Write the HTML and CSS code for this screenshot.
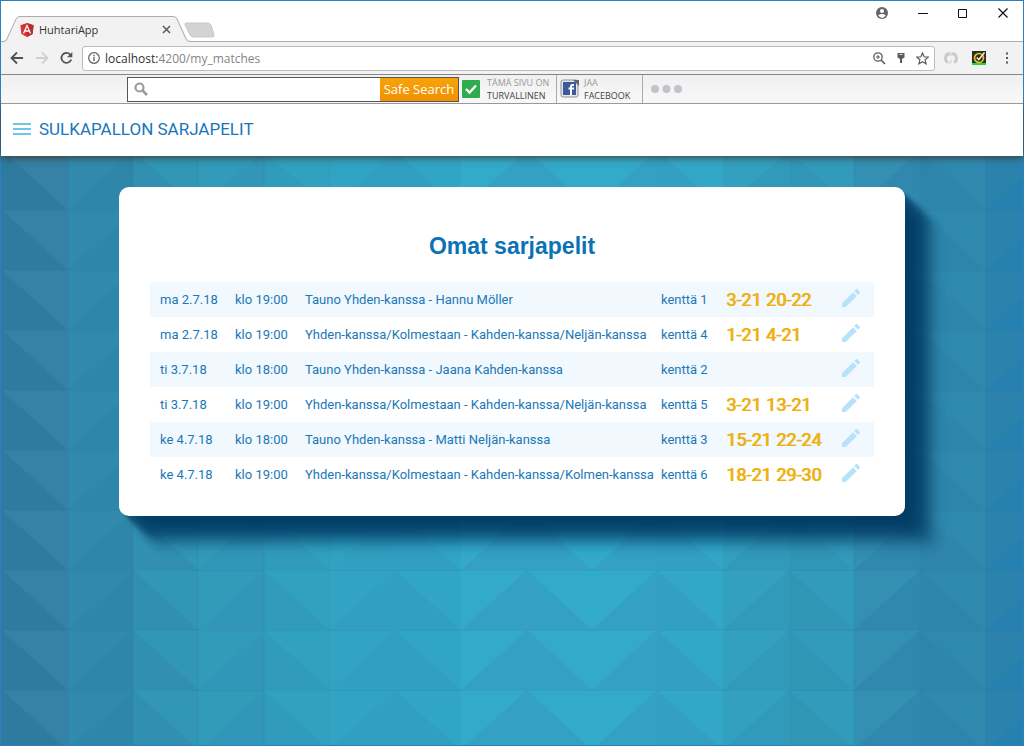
FILE: index.html
```html
<!DOCTYPE html>
<html lang="fi">
<head>
<meta charset="utf-8">
<title>HuhtariApp</title>
<link rel="stylesheet" href="styles.css">
</head>
<body>
<div class="window">
  <header class="chrome">
    <div class="tabstrip">
      <svg class="tab-shape" width="216" height="26" viewBox="0 0 216 26" aria-hidden="true">
        <path d="M0 25.500H4L15 3Q16.500 .5 19 .5H173Q176 .5 177 3L187 24Q188 25.500 190 25.500H216V27H0Z" fill="#f2f2f2"/>
        <path d="M0 25.500H2Q5 25.500 6 23L15 3Q16.500 .5 19 .5H172Q175 .5 176 3L185 23Q186 25.500 189 25.500H216" fill="none" stroke="#a9abad"/>
        <path d="M185 7H206Q209 7 210 9L213 19Q213.500 21 211 21H193Q190 21 189 19L184 9Q183.500 7 185 7Z" fill="#d3d3d3" stroke="#c8c8c8"/>
      </svg>
      <div class="tab">
        <svg width="14" height="14" viewBox="0 0 14 14" aria-hidden="true"><path d="M7 0L13.600 2.300L12.600 11L7 14L1.400 11L.4 2.300Z" fill="#dd2c33"/><path d="M7 0L13.600 2.300L12.600 11L7 14Z" fill="#b52e31"/><path d="M3.500 10.500L7 2.500L10.500 10.500M5 8H9" fill="none" stroke="#fff" stroke-width="1.300"/></svg>
        <span class="tab-title">HuhtariApp</span>
        <button class="bare" aria-label="Sulje välilehti"><svg width="9" height="9" viewBox="0 0 9 9"><path d="M1 1L8 8M8 1L1 8" stroke="#5a5a5a" stroke-width="1.500"/></svg></button>
      </div>
      <div class="win-buttons">
        <button class="bare" aria-label="Käyttäjä"><svg width="12" height="12" viewBox="0 0 12 12"><circle cx="6" cy="6" r="6" fill="#666"/><circle cx="6" cy="4" r="2" fill="#fff"/><path d="M2.200 8.300Q6 5.500 9.800 8.300Q8 11 6 11Q4 11 2.200 8.300Z" fill="#fff"/></svg></button>
        <button class="bare" aria-label="Pienennä"><svg width="10" height="10" viewBox="0 0 10 10"><path d="M0 5.500H10" stroke="#111"/></svg></button>
        <button class="bare" aria-label="Suurenna"><svg width="10" height="10" viewBox="0 0 10 10"><path d="M.5 1.500H8.500V9.500H.5Z" fill="none" stroke="#111"/></svg></button>
        <button class="bare" aria-label="Sulje"><svg width="10" height="10" viewBox="0 0 10 10"><path d="M.5 .5L9.500 9.500M9.500 .5L.5 9.500" stroke="#111" stroke-width="1.200"/></svg></button>
      </div>
    </div>
    <div class="navbar">
      <button class="bare" aria-label="Takaisin"><svg width="14" height="14" viewBox="0 0 14 14"><path d="M13 7H2M7 1.500L1.500 7L7 12.500" fill="none" stroke="#4f5254" stroke-width="1.800"/></svg></button>
      <button class="bare" aria-label="Eteenpäin"><svg width="14" height="14" viewBox="0 0 14 14"><path d="M1 7H12M7 1.500L12.500 7L7 12.500" fill="none" stroke="#d0d1d2" stroke-width="1.800"/></svg></button>
      <button class="bare" aria-label="Lataa uudelleen"><svg width="14" height="14" viewBox="0 0 14 14"><path d="M10.200 3.500A5 5 0 1 0 11.200 8.500" fill="none" stroke="#4f5254" stroke-width="1.800"/><path d="M12.300 1V6.200H7Z" fill="#4f5254"/></svg></button>
      <div class="omnibox">
        <svg width="12" height="12" viewBox="0 0 12 12" aria-hidden="true"><circle cx="6" cy="6" r="5.300" fill="none" stroke="#5a5d5f" stroke-width="1.200"/><path d="M6 5V9M6 2.800V4.200" stroke="#5a5d5f" stroke-width="1.300"/></svg>
        <a class="url" href="#"><span class="host">localhost:</span>4200/my_matches</a>
        <svg width="14" height="14" viewBox="0 0 14 14" aria-hidden="true"><circle cx="6" cy="6" r="4.200" fill="none" stroke="#5a5d5f" stroke-width="1.300"/><path d="M9 9L13 13" stroke="#5a5d5f" stroke-width="1.700"/><path d="M4 6H8M6 4V8" stroke="#5a5d5f"/></svg>
        <svg width="8" height="12" viewBox="0 0 8 12" aria-hidden="true"><path d="M.5 1H7.500V5.500L5 7V11H3V7L.5 5.500Z" fill="#5a5d5f"/><path d="M2.500 2.500H5.500" stroke="#ddd"/></svg>
        <svg width="13" height="13" viewBox="0 0 13 13" aria-hidden="true"><path d="M6.500 1L8.100 4.800L12.200 5.100L9.100 7.800L10.100 11.800L6.500 9.700L2.900 11.800L3.900 7.800L.8 5.100L4.900 4.800Z" fill="none" stroke="#5a5d5f" stroke-width="1.200"/></svg>
      </div>
      <div class="extensions">
        <svg width="14" height="14" viewBox="0 0 14 14" aria-hidden="true"><path d="M6 2.500A4.800 4.800 0 0 0 4 11.500M8 2.500A4.800 4.800 0 0 1 10 11.500" fill="none" stroke="#c9c9c9" stroke-width="2.800"/><path d="M8.500 1L6.500 5M7.500 9L5.500 13" stroke="#d5d5d5" stroke-width="1.500"/></svg>
        <svg width="14" height="14" viewBox="0 0 14 14" aria-hidden="true"><rect width="14" height="14" fill="#26302a"/><path d="M0 13H14" stroke="#23d839" stroke-width="2"/><circle cx="7" cy="7" r="4.500" fill="none" stroke="#f0bd23" stroke-width="1.700"/><path d="M4.800 6.500L6.800 8.700L12.500 1.500" fill="none" stroke="#fff4c4" stroke-width="1.500"/></svg>
        <button class="bare" aria-label="Valikko"><svg width="14" height="14" viewBox="0 0 14 14"><path d="M6 1.500H8V3.500H6ZM6 6H8V8H6ZM6 10.500H8V12.500H6Z" fill="#555"/></svg></button>
      </div>
    </div>
    <div class="safebar">
      <form class="search">
        <svg width="14" height="14" viewBox="0 0 14 14" aria-hidden="true"><circle cx="5.500" cy="5.500" r="4" fill="none" stroke="#9b9b9b" stroke-width="2.200"/><path d="M8.500 8.500L13 13" stroke="#9b9b9b" stroke-width="2.600"/></svg>
        <input type="text" aria-label="Safe Search">
        <button type="button">Safe Search</button>
      </form>
      <div class="safe-item">
        <svg width="18" height="18" viewBox="0 0 18 18" aria-hidden="true"><rect width="18" height="18" rx="1" fill="#2fad4e"/><path d="M4 9L7.500 12.500L14 5.500" fill="none" stroke="#fff" stroke-width="2.400"/></svg>
        <p>TÄMÄ SIVU ON<br><b>TURVALLINEN</b></p>
      </div>
      <div class="safe-item share">
        <svg width="20" height="20" viewBox="0 0 20 20" aria-hidden="true"><rect x="1" y="1" width="17" height="17" rx="2" fill="#e5e7ea" stroke="#8d9299"/><rect x="3" y="3" width="13" height="13" fill="#3c5a9b"/><path d="M14 6H12.500Q11 6 11 7.500V16M8.500 9.500H14" fill="none" stroke="#fff" stroke-width="2"/><path d="M13 1H19V7Z" fill="#61666c"/></svg>
        <p>JAA<br><b>FACEBOOK</b></p>
      </div>
      <button class="bare more" aria-label="Lisää"><svg width="32" height="8" viewBox="0 0 32 8"><g fill="#c0c5cb"><circle cx="4" cy="4" r="4"/><circle cx="15.500" cy="4" r="4"/><circle cx="27" cy="4" r="4"/></g></svg></button>
    </div>
  </header>
  <div class="appbar">
    <button class="bare" aria-label="Avaa valikko"><svg width="18" height="14" viewBox="0 0 18 14"><path d="M0 2H18M0 7H18M0 12H18" stroke="#6fc5ec" stroke-width="2"/></svg></button>
    <span>SULKAPALLON SARJAPELIT</span>
  </div>
  <main class="page">
    <section class="card">
      <h1>Omat sarjapelit</h1>
      <table class="matches">
        <colgroup><col class="c-date"><col class="c-time"><col class="c-names"><col class="c-court"><col class="c-score"><col class="c-edit"></colgroup>
        <tbody>
          <tr><td>ma 2.7.18</td><td>klo 19:00</td><td>Tauno Yhden-kanssa - Hannu Möller</td><td>kenttä 1</td><td class="score">3-21 20-22</td><td><button class="bare edit" aria-label="Muokkaa"><svg width="18" height="18" viewBox="3 3 18 18"><path d="M3 17.250V21h3.750L17.810 9.940l-3.750-3.750L3 17.250zM20.710 7.040a1 1 0 0 0 0-1.410l-2.340-2.340a1 1 0 0 0-1.410 0l-1.830 1.830 3.750 3.750 1.830-1.830z"/></svg></button></td></tr>
          <tr><td>ma 2.7.18</td><td>klo 19:00</td><td>Yhden-kanssa/Kolmestaan - Kahden-kanssa/Neljän-kanssa</td><td>kenttä 4</td><td class="score">1-21 4-21</td><td><button class="bare edit" aria-label="Muokkaa"><svg width="18" height="18" viewBox="3 3 18 18"><path d="M3 17.250V21h3.750L17.810 9.940l-3.750-3.750L3 17.250zM20.710 7.040a1 1 0 0 0 0-1.410l-2.340-2.340a1 1 0 0 0-1.410 0l-1.830 1.830 3.750 3.750 1.830-1.830z"/></svg></button></td></tr>
          <tr><td>ti 3.7.18</td><td>klo 18:00</td><td>Tauno Yhden-kanssa - Jaana Kahden-kanssa</td><td>kenttä 2</td><td class="score"></td><td><button class="bare edit" aria-label="Muokkaa"><svg width="18" height="18" viewBox="3 3 18 18"><path d="M3 17.250V21h3.750L17.810 9.940l-3.750-3.750L3 17.250zM20.710 7.040a1 1 0 0 0 0-1.410l-2.340-2.340a1 1 0 0 0-1.410 0l-1.830 1.830 3.750 3.750 1.830-1.830z"/></svg></button></td></tr>
          <tr><td>ti 3.7.18</td><td>klo 19:00</td><td>Yhden-kanssa/Kolmestaan - Kahden-kanssa/Neljän-kanssa</td><td>kenttä 5</td><td class="score">3-21 13-21</td><td><button class="bare edit" aria-label="Muokkaa"><svg width="18" height="18" viewBox="3 3 18 18"><path d="M3 17.250V21h3.750L17.810 9.940l-3.750-3.750L3 17.250zM20.710 7.040a1 1 0 0 0 0-1.410l-2.340-2.340a1 1 0 0 0-1.410 0l-1.830 1.830 3.750 3.750 1.830-1.830z"/></svg></button></td></tr>
          <tr><td>ke 4.7.18</td><td>klo 18:00</td><td>Tauno Yhden-kanssa - Matti Neljän-kanssa</td><td>kenttä 3</td><td class="score">15-21 22-24</td><td><button class="bare edit" aria-label="Muokkaa"><svg width="18" height="18" viewBox="3 3 18 18"><path d="M3 17.250V21h3.750L17.810 9.940l-3.750-3.750L3 17.250zM20.710 7.040a1 1 0 0 0 0-1.410l-2.340-2.340a1 1 0 0 0-1.410 0l-1.830 1.830 3.750 3.750 1.830-1.830z"/></svg></button></td></tr>
          <tr><td>ke 4.7.18</td><td>klo 19:00</td><td>Yhden-kanssa/Kolmestaan - Kahden-kanssa/Kolmen-kanssa</td><td>kenttä 6</td><td class="score">18-21 29-30</td><td><button class="bare edit" aria-label="Muokkaa"><svg width="18" height="18" viewBox="3 3 18 18"><path d="M3 17.250V21h3.750L17.810 9.940l-3.750-3.750L3 17.250zM20.710 7.040a1 1 0 0 0 0-1.410l-2.340-2.340a1 1 0 0 0-1.410 0l-1.830 1.830 3.750 3.750 1.830-1.830z"/></svg></button></td></tr>
        </tbody>
      </table>
    </section>
  </main>
</div>
</body>
</html>
```
FILE: styles.css
```css
* { box-sizing: border-box; }
body { margin: 0; font-family: Roboto, sans-serif; }
p { margin: 0; }
svg { display: block; flex: none; }
.bare { display: block; padding: 0; border: 0; background: none; }

.window {
  display: flex;
  flex-direction: column;
  min-height: 100vh;
  border: 1px solid #2b80bd;
}

/* browser chrome */
.chrome { position: relative; z-index: 1; font-family: "Open Sans", sans-serif; }
.tabstrip {
  position: relative;
  display: flex;
  justify-content: space-between;
  height: 41px;
  padding: 0 15px 0 19px;
  background: linear-gradient(#a9abad, #a9abad) bottom / 100% 1px no-repeat #fff;
}
.tab-shape { position: absolute; left: 0; bottom: 0; }
.tab {
  position: relative;
  display: flex;
  align-items: center;
  gap: 5px;
  width: 151px;
  padding-top: 16px;
}
.tab-title { flex: 1; font-size: 11px; color: #333; }
.win-buttons { display: flex; gap: 30px; padding-top: 6px; height: 18px; align-items: center; }

.navbar {
  display: flex;
  align-items: center;
  gap: 11px;
  height: 32px;
  padding: 0 9px;
  background: #f2f2f2;
}
.omnibox {
  flex: 1;
  display: flex;
  align-items: center;
  gap: 11px;
  height: 25px;
  margin: 0 -2px 0 -3px;
  padding: 0 5px;
  border: 1px solid #bcbcbc;
  border-radius: 3px;
  background: #fff;
}
.url { flex: 1; margin-left: -6px; font-size: 12px; color: #858585; text-decoration: none; }
.host { color: #333; }
.extensions { display: flex; align-items: center; gap: 14px; }

.safebar {
  display: flex;
  align-items: center;
  height: 30px;
  padding-left: 126px;
  border-top: 1px solid #858585;
  border-bottom: 1px solid #999;
  background: linear-gradient(#f0f0f0, #f8f8f8);
}
.search {
  display: flex;
  align-items: center;
  width: 332px;
  height: 25px;
  padding-left: 6px;
  border: 1px solid #555;
  background: #fff;
}
.search input { flex: 1; min-width: 0; height: 20px; border: 0; outline: 0; }
.search button {
  width: 78px;
  height: 23px;
  padding: 0;
  border: 0;
  background: linear-gradient(#f6a30a, #f29100);
  color: #fff;
  font: 13px/23px "Open Sans", sans-serif;
}
.safe-item {
  display: flex;
  align-items: center;
  gap: 7px;
  width: 98px;
  height: 28px;
  padding-left: 3px;
  border-right: 1px solid #aaa;
  white-space: nowrap;
  font-size: 9px;
  line-height: 13px;
  color: #999;
}
.safe-item b { font-weight: 400; color: #444; }
.share { width: 86px; gap: 4px; padding-left: 3px; }
.more { margin-left: 8px; }

/* application */
.appbar {
  position: relative;
  display: flex;
  align-items: center;
  gap: 8px;
  height: 52px;
  padding: 0 12px 2px;
  background: #fff;
  box-shadow: 0 1px 8px rgba(60, 30, 10, .8);
  font-size: 17px;
  color: #1976b9;
}
.page {
  flex: 1;
  display: flex;
  justify-content: center;
  align-items: flex-start;
  padding: 31px 24px;
  background: #319bbc url("data:image/svg+xml,%3Csvg xmlns='http://www.w3.org/2000/svg' viewBox='1 0 1022 60' preserveAspectRatio='none'%3E%3Cg fill='%232f7a9f'%3E%3Cpath d='M0 0H68V60H0Z'/%3E%3Cpath fill='%233582a6' d='M2 0H68V60Z'/%3E%3Cpath fill='%232e86a9' d='M68 0H134V60H68Z'/%3E%3Cpath fill='%23318aab' d='M68 0H133L68 60Z'/%3E%3Cpath fill='%23318fb1' d='M133 0H199V60H133Z'/%3E%3Cpath fill='%233197b5' d='M133 0H199V60Z'/%3E%3Cpath fill='%233196b7' d='M198 0H265V60H198Z'/%3E%3Cpath fill='%23329bb9' d='M198 0H264L198 60Z'/%3E%3Cpath fill='%23319bbc' d='M264 0H331V60H264Z'/%3E%3Cpath fill='%2331a1c0' d='M264 0H330V60Z'/%3E%3Cpath fill='%23319fc0' d='M330 0H396V60H330Z'/%3E%3Cpath fill='%2331a3c3' d='M330 0H395L330 60Z'/%3E%3Cpath fill='%23319fc2' d='M395 0H462V60H395Z'/%3E%3Cpath fill='%2331a5c6' d='M395 0H461V60Z'/%3E%3Cpath fill='%2334a0c4' d='M461 0H658V60H461Z'/%3E%3Cpath fill='%2333aaca' d='M461 0H527L461 60ZM527 0H657L592 60Z'/%3E%3Cpath fill='%23329fc3' d='M657 0H724V60H657Z'/%3E%3Cpath fill='%2333a7c8' d='M657 0H723V60Z'/%3E%3Cpath fill='%233199b9' d='M723 0H790V60H723Z'/%3E%3Cpath fill='%2333a0c0' d='M723 0H789L723 60Z'/%3E%3Cpath fill='%233195b6' d='M789 0H855V60H789Z'/%3E%3Cpath fill='%23329abb' d='M789 0H854V60Z'/%3E%3Cpath fill='%233088ae' d='M854 0H921V60H854Z'/%3E%3Cpath fill='%233390b2' d='M854 0H920L854 60Z'/%3E%3Cpath fill='%232e85ab' d='M920 0H987V60H920Z'/%3E%3Cpath fill='%232f89af' d='M920 0H986V60Z'/%3E%3Cpath fill='%232680b0' d='M986 0H1024V60H986Z'/%3E%3Cpath fill='%232b83ad' d='M986 0H1024V25L986 60Z'/%3E%3C/g%3E%3Cpath d='M0 .5H1024M68 0V60M133 0V60M198 0V60M264 0V60M330 0V60M854 0V60M920 0V60M986 0V60' stroke='%23105080' stroke-opacity='.1' fill='none'/%3E%3C/svg%3E") 0 -6px / 100% 60px;
}
.card {
  padding: 31px 31px 24px;
  border-radius: 10px;
  background: #fff;
  box-shadow:
    3px 3px 2px rgba(0, 57, 94, .2),
    6px 6px 3px rgba(0, 57, 94, .25),
    9px 9px 3px rgba(0, 57, 94, .25),
    12px 12px 4px rgba(0, 57, 94, .25),
    15px 15px 4px rgba(0, 57, 94, .25),
    18px 18px 5px rgba(0, 57, 94, .25),
    21px 21px 6px rgba(0, 57, 94, .25),
    24px 24px 6px rgba(0, 57, 94, .2),
    27px 27px 7px rgba(0, 57, 94, .16),
    30px 30px 7px rgba(0, 57, 94, .11),
    33px 33px 8px rgba(0, 57, 94, .07),
    36px 36px 8px rgba(0, 57, 94, .04);
}
.card h1 {
  margin: 12px 0 20px;
  font: bold 23px/32px "Liberation Sans", Arial, sans-serif;
  text-align: center;
  color: #0b72b5;
}
.matches { table-layout: fixed; width: 724px; border-collapse: collapse; font-size: 13px; color: #1a78b8; }
.c-date { width: 75px; }
.c-time { width: 70px; }
.c-names { width: 356px; }
.c-court { width: 65px; }
.c-score { width: 116px; }
.c-edit { width: 42px; }
.matches tr:nth-child(odd) { background: #f1f8fe; }
.matches td { height: 35px; padding: 0 0 0 10px; white-space: nowrap; }
.matches .score { font-size: 18px; color: #eeb111; text-shadow: 1px 0 #eeb111; }
.edit { margin-bottom: 4px; fill: #b8e1fa; }
```
